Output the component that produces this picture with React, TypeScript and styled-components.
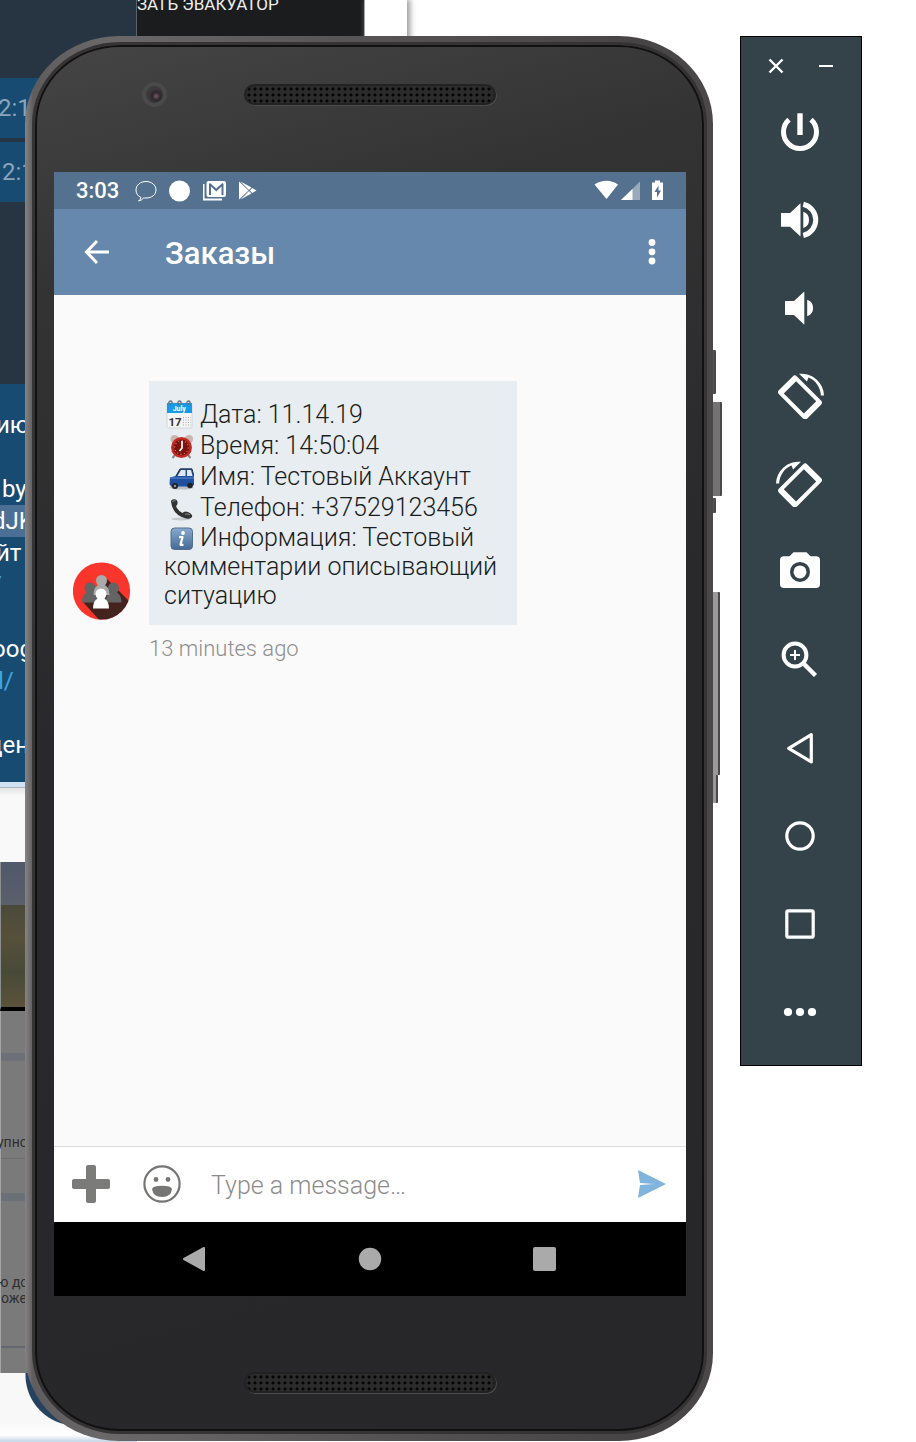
import React from "react";
import styled, { createGlobalStyle } from "styled-components";

const GlobalStyle = createGlobalStyle`
  * { box-sizing: border-box; }
  body { margin: 0; background: #fff; font-family: Roboto, "Noto Sans", sans-serif; }
  button { border: 0; padding: 0; background: none; color: inherit; font: inherit; cursor: pointer; }
  svg { display: block; flex: none; }
`;

const Desktop = styled.main`
  position: relative;
  display: flex;
  gap: 27px;
  min-height: 100vh;
  padding: 36px 54px 1px 25px;
  overflow: hidden;
`;

/* Windows left open behind the emulator */

const Backdrop = styled.div`
  position: absolute;
  inset: 0;
  display: flex;
  align-items: flex-start;
  overflow: hidden;
`;

const Stack = styled.div`
  width: 137px;
  flex: none;
  display: flex;
  flex-direction: column;
`;

const ChatWindow = styled.div`
  height: 782px;
  padding-top: 78px;
  background: #273442;
  border-right: 1px solid #59636d;
`;

const TimeBlock = styled.div<{ $shift: number }>`
  height: 60px;
  margin-bottom: 4px;
  text-indent: ${(p) => p.$shift}px;
  background: #184b72;
  color: #88a5bb;
  font-size: 24px;
  line-height: 60px;
`;

const LongMessage = styled.div`
  height: 398px;
  margin-top: 182px;
  padding-top: 25px;
  background: #184b72;
  color: #fff;
  font-size: 24px;
  line-height: 32px;
`;

const MessageLine = styled.div<{ $shift?: number; $link?: boolean; $selected?: boolean }>`
  height: 32px;
  text-indent: ${(p) => p.$shift ?? 0}px;
  white-space: nowrap;
  color: ${(p) => (p.$link ? "#3ea6e0" : "inherit")};
  background: ${(p) => (p.$selected ? "#4c6f96" : "transparent")};
`;

const PaleEdge = styled.div`
  height: 6px;
  background: #cfe2f3;
  border-bottom: 1px solid #a9b4bf;
`;

const BlankPage = styled.div`
  height: 74px;
  background: linear-gradient(#e4e4e4, #f9f9f9 8px);
`;

const MapPhoto = styled.div`
  height: 149px;
  border-left: 1px solid #8b8f90;
  border-bottom: 4px solid #000;
  background: linear-gradient(#50596a, #5a5f6b 43px, #4a4a3a 43px, #56503a 75px, #484a38 110px, #5b523a);
`;

const DimmedPage = styled.div`
  height: 362px;
  padding-top: 123px;
  border-left: 1px solid #a5a5a5;
  color: #303030;
  font-size: 14px;
  line-height: 16px;
  background:
    linear-gradient(#6d7077, #6d7077) 0 42px / 100% 8px no-repeat,
    linear-gradient(#6f6f6f, #6f6f6f) 0 147px / 100% 1px no-repeat,
    linear-gradient(#6a7076, #6a7076) 0 182px / 100% 8px no-repeat,
    linear-gradient(#62686d, #62686d) 0 335px / 100% 2px no-repeat,
    #7a7a7a;
`;

const DimmedText = styled.p`
  margin: 0 0 124px;
  text-indent: -4px;
  white-space: pre-line;
`;

const RoundedFooter = styled.div`
  height: 69px;
  background: radial-gradient(circle at 76px 2px, #27425f 50px, transparent 51px), linear-gradient(#f8f8f8 50px, #fff 62px, #c3d4e4);
`;

const AppWindow = styled.div`
  width: 228px;
  height: 60px;
  flex: none;
  background: #1a1c1e;
  border-right: 1px solid #aaa;
  color: #eee;
  font-size: 17px;
  line-height: 20px;
  white-space: nowrap;
  overflow: hidden;
`;

const AppWindowTitle = styled.div`
  margin-top: -6px;
`;

const PaperWindow = styled.div`
  width: 42px;
  height: 60px;
  flex: none;
  background: #fff;
  box-shadow: 2px 0 6px 1px #999;
`;

/* Phone */

const Phone = styled.section`
  position: relative;
  flex: 1;
  display: flex;
  padding: 6px 6px 7px 7px;
  border-radius: 94px / 88px;
  background: linear-gradient(90deg, #858383, #5e5c5c 8px, #6a6868 80px, #555353 50%, #464445 calc(100% - 80px), #4a4849);
`;

const SideKey = styled.i<{ $top: number; $length: number; $depth: number; $tone: string }>`
  position: absolute;
  left: 100%;
  top: ${(p) => p.$top}px;
  width: ${(p) => p.$depth}px;
  height: ${(p) => p.$length}px;
  border-right: 2px solid #4a4849;
  border-radius: 0 1px 1px 0;
  background: ${(p) => p.$tone};
`;

const Glass = styled.div`
  flex: 1;
  min-width: 0;
  display: flex;
  flex-direction: column;
  padding: 0 18px 0 19px;
  border: 3px solid #353334;
  border-radius: 88px / 82px;
  box-shadow: inset 0 0 0 2px #111;
  background: linear-gradient(165deg, #464545 0, #343334 16%, #29282a 45%, #272628 100%);
`;

const Bezel = styled.div<{ $bottom?: boolean }>`
  position: relative;
  height: ${(p) => (p.$bottom ? 135 : 127)}px;
  flex: none;
  display: flex;
  justify-content: center;
  padding-top: ${(p) => (p.$bottom ? 76 : 39)}px;
`;

const Speaker = styled.div`
  width: 252px;
  height: 21px;
  border: 2px solid #222223;
  border-radius: 11px;
  box-shadow: 1px 1px 0 #4c4c4c;
  background: radial-gradient(circle, #050505 1px, #2b2b2b 2px) 0 0 / 6px 6px;
`;

const Camera = styled.div`
  position: absolute;
  left: 88px;
  top: 37px;
  width: 25px;
  height: 25px;
  border: 4px solid #4b4a4a;
  border-radius: 50%;
  background: radial-gradient(circle at 60% 60%, #7a5a60 0, #2c272d 4px, #3d3a3c 8px);
`;

const Screen = styled.div`
  flex: 1;
  display: flex;
  flex-direction: column;
  background: #fafafa;
`;

const StatusBar = styled.div`
  height: 37px;
  display: flex;
  align-items: center;
  justify-content: space-between;
  padding: 0 22px;
  background: #54728f;
  color: #fff;
`;

const StatusGroup = styled.div<{ $gap: number }>`
  display: flex;
  align-items: center;
  gap: ${(p) => p.$gap}px;
`;

const Clock = styled.time`
  margin-right: 4px;
  font-size: 22px;
  font-weight: 500;
  line-height: 37px;
`;

const AppBar = styled.header`
  height: 86px;
  display: flex;
  align-items: center;
  padding: 0 20px 0 28px;
  background: #6588ac;
  color: #fff;
`;

const AppTitle = styled.h1`
  flex: 1;
  margin: 4px 0 0 53px;
  font-size: 31px;
  font-weight: 500;
  line-height: 40px;
`;

const Conversation = styled.div`
  flex: 1;
  padding: 86px 19px;
`;

const Message = styled.article`
  display: grid;
  grid-template-columns: 58px minmax(0, 368px);
  column-gap: 18px;
`;

const Avatar = styled.div`
  align-self: end;
  padding-bottom: 5px;
`;

const Bubble = styled.div`
  padding: 18px 15px 15px;
  background: #e8edf1;
  color: #1a1d20;
  font-size: 25px;
  font-weight: 300;
  line-height: 31px;
`;

const BubbleText = styled.p`
  margin: 0;
  &:last-child { line-height: 29px; }
  svg {
    display: inline-block;
    width: 30px;
    height: 30px;
    margin: -6px 6px -6px 0;
    vertical-align: baseline;
  }
`;

const Sent = styled.time`
  grid-column: 2;
  margin-top: 9px;
  color: #8f8f8f;
  font-size: 22px;
  font-weight: 300;
  line-height: 30px;
`;

const Composer = styled.form`
  height: 76px;
  display: flex;
  align-items: center;
  padding: 0 19px 0 18px;
  border-top: 1px solid #ddd;
  background: #fff;
`;

const MessageInput = styled.input`
  flex: 1;
  min-width: 0;
  margin: 2px 24px 0 29px;
  padding: 0;
  border: 0;
  outline: 0;
  background: none;
  font: 300 25px/32px Roboto, sans-serif;
  &::placeholder { color: #8c8c8c; opacity: 1; }
`;

const EmojiButton = styled.button`
  margin-left: 32px;
`;

const NavBar = styled.nav`
  height: 74px;
  display: flex;
  align-items: center;
  justify-content: center;
  gap: 151px;
  background: #000;
  color: #aaa;
`;

/* Emulator tool strip */

const Tools = styled.aside`
  position: relative;
  align-self: flex-start;
  width: 122px;
  flex: none;
  padding-bottom: 10px;
  border: 1px solid #000;
  background: #344249;
  color: #fff;
`;

const WindowButtons = styled.div`
  height: 50px;
  display: flex;
  justify-content: center;
  padding-top: 8px;
`;

const WindowButton = styled.button`
  width: 50px;
  height: 42px;
  display: grid;
  place-items: center;
`;

const ToolButton = styled.button`
  width: 118px;
  height: 88px;
  display: grid;
  place-items: center;
`;

const Glyph = ({ children, w = 48, h = w }: { children: React.ReactNode; w?: number; h?: number }) => (
  <svg width={w} height={h} viewBox={`0 0 ${w} ${h}`} fill="currentColor" aria-hidden="true">
    {children}
  </svg>
);

const RotateShape = () => (
  <>
    <path
      transform="translate(24 26.4) rotate(-45)"
      fillRule="evenodd"
      d="M-17 -12.7H17A3 3 0 0 1 20 -9.7V9.7A3 3 0 0 1 17 12.7H-17A3 3 0 0 1 -20 9.7V-9.7A3 3 0 0 1 -17 -12.7ZM-14.2 -8.7V8.7H14.2V-8.7Z"
    />
    <path d="M0 24.5A22.5 22.5 0 0 1 25 2.8L17 10.6L15.6 6.6A19.5 19.5 0 0 0 3.2 24.5Z" />
  </>
);

const tools: { label: string; shape: React.ReactNode }[] = [
  {
    label: "Power",
    shape: (
      <>
        <path d="M13 12.7A16.5 16.5 0 1 0 35 12.7" fill="none" stroke="currentColor" strokeWidth="5" />
        <path d="M21.3 6.3h5.4v21.7h-5.4z" />
      </>
    ),
  },
  {
    label: "Volume up",
    shape: (
      <>
        <path d="M5 18H14L24.5 8.3V41.5L14 31.8H5ZM27.3 16.8A8.6 8.6 0 0 1 27.3 33Z" />
        <path d="M27.3 9.3A16 16 0 0 1 27.3 40.5" fill="none" stroke="currentColor" strokeWidth="5" />
      </>
    ),
  },
  { label: "Volume down", shape: <path d="M9 18H18L28.3 8.6V41.7L18 32H9ZM31.2 16.7A8.8 8.8 0 0 1 31.2 33.3Z" /> },
  { label: "Rotate left", shape: <g transform="translate(48 0) scale(-1 1)"><RotateShape /></g> },
  { label: "Rotate right", shape: <RotateShape /> },
  {
    label: "Take screenshot",
    shape: (
      <>
        <path
          fillRule="evenodd"
          d="M17.5 5.2H30.5L34.5 9.2H40A4 4 0 0 1 44 13.2V37A4 4 0 0 1 40 41H8A4 4 0 0 1 4 37V13.2A4 4 0 0 1 8 9.2H13.5ZM24 14.9A10 10 0 1 0 24 34.9A10 10 0 1 0 24 14.9Z"
        />
        <circle cx="24" cy="24.9" r="6.5" />
      </>
    ),
  },
  {
    label: "Zoom",
    shape: (
      <g fill="none" stroke="currentColor">
        <circle cx="19" cy="20" r="11.4" strokeWidth="4" />
        <path d="M27.5 28.5L39.5 40.5" strokeWidth="4.4" />
        <path d="M14 20H24M19 15V25" strokeWidth="2" />
      </g>
    ),
  },
  { label: "Back", shape: <path d="M35.3 11.7V38.9L12.7 25.3Z" fill="none" stroke="currentColor" strokeWidth="3.2" strokeLinejoin="round" /> },
  { label: "Home", shape: <circle cx="24" cy="25" r="13.2" fill="none" stroke="currentColor" strokeWidth="3.2" /> },
  { label: "Overview", shape: <rect x="10.8" y="11.8" width="26.4" height="26.4" rx="1.5" fill="none" stroke="currentColor" strokeWidth="3.2" /> },
  {
    label: "More",
    shape: (
      <>
        <circle cx="12" cy="25" r="4.1" />
        <circle cx="24" cy="25" r="4.1" />
        <circle cx="36" cy="25" r="4.1" />
      </>
    ),
  },
];

const CalendarIcon = () => (
  <svg viewBox="0 0 30 30" aria-hidden="true">
    <rect x="3" y="4" width="25" height="25" rx="1.5" fill="#f4f4f4" stroke="#c3c7ca" strokeWidth="0.6" />
    <path d="M3 4H28V14H3Z" fill="#159be8" />
    <g fill="none" stroke="#69727a" strokeWidth="1.3"><circle cx="6.5" cy="3.6" r="1.6" /><circle cx="15.5" cy="3.6" r="1.6" /><circle cx="24.5" cy="3.6" r="1.6" /></g>
    <text x="15.3" y="12" fontSize="7" fontWeight="700" textAnchor="middle" fill="#fff" fontFamily="Roboto, sans-serif">July</text>
    <text x="4.5" y="26.5" fontSize="11.5" fontWeight="700" fill="#333" fontFamily="Roboto, sans-serif">17</text>
    <path d="M19 18.5H27M19 21H27M19 23.5H27M19 26H27" stroke="#aaa" strokeWidth="1" strokeDasharray="1 1.5" />
  </svg>
);

const AlarmIcon = () => (
  <svg viewBox="0 0 30 30" aria-hidden="true">
    <path d="M11 25L8.5 28M24 25L26.5 28" stroke="#888" strokeWidth="2" />
    <circle cx="10.5" cy="9" r="4" fill="#c9b5b2" />
    <circle cx="25" cy="9" r="4" fill="#c9b5b2" />
    <circle cx="17.5" cy="17.5" r="10.5" fill="#c42c22" />
    <circle cx="17.5" cy="17.5" r="8" fill="#7c130e" />
    <circle cx="17.5" cy="17.5" r="6.8" fill="none" stroke="#f0b3a8" strokeWidth="1" strokeDasharray="1 2.56" />
    <path d="M18 11V18L15.5 21" fill="none" stroke="#fff" strokeWidth="1.7" />
  </svg>
);

const CarIcon = () => (
  <svg viewBox="0 0 30 30" aria-hidden="true">
    <ellipse cx="17.5" cy="26.5" rx="12" ry="2" fill="#b9bec2" />
    <path d="M6 16.5L11.5 15L15.5 8.5Q16 7.5 17.5 7.5H28L30 16V24L27 25.5H7L5.5 23Z" fill="#1f4f9f" />
    <path d="M13.5 15L17 9H21.5V15ZM23 9H27L28.5 15H23Z" fill="#dfe8ee" />
    <path d="M12 15L16 8H28L30 15" fill="none" stroke="#26313f" strokeWidth="1" />
    <path d="M6 17H30" stroke="#4878c6" strokeWidth="1.5" />
    <circle cx="11" cy="25" r="3" fill="#222" />
    <circle cx="26" cy="24.5" r="2.8" fill="#222" />
    <circle cx="11" cy="25" r="1.2" fill="#999" />
  </svg>
);

const HandsetIcon = () => (
  <svg viewBox="0 0 30 30" aria-hidden="true">
    <ellipse cx="17" cy="27" rx="10" ry="1.4" fill="#c5cacd" />
    <path d="M7 9.5Q7 7.5 10 7.2Q13 7 13.5 10Q14 12.5 12 14Q13.5 18.5 18.5 21Q20.5 18.5 24 20Q29 22.5 28 25Q26.5 27.5 22 26.5Q8.5 23 7 9.5Z" fill="#333" />
    <path d="M8.5 10Q9.5 8 11.5 9M21 22.5Q23 21 26 23" fill="none" stroke="#777" strokeWidth="1.2" />
  </svg>
);

const InfoIcon = () => (
  <svg viewBox="0 0 30 30" aria-hidden="true">
    <defs>
      <linearGradient id="info" x2="0" y2="1"><stop stopColor="#88aacd" /><stop offset="1" stopColor="#466a95" /></linearGradient>
    </defs>
    <rect x="7" y="6" width="21.5" height="21.5" rx="3.5" fill="url(#info)" stroke="#526f91" />
    <circle cx="19" cy="11" r="1.9" fill="#fff" />
    <path d="M15 15.2H18.5L16.5 22.8H19.5" fill="none" stroke="#fff" strokeWidth="2.2" strokeLinejoin="round" />
  </svg>
);

const Pawn = ({ x, y, fill }: { x: number; y: number; fill: string }) => (
  <path
    transform={`translate(${x} ${y})`}
    fill={fill}
    d="M0 0A5.5 5.5 0 0 1 5.5 5.5Q5.5 8 3.6 10.2Q8 12.5 8 20H-8Q-8 12.5 -3.6 10.2Q-5.5 8 -5.5 5.5A5.5 5.5 0 0 1 0 0Z"
  />
);

const AvatarPicture = () => (
  <svg width="58" height="58" viewBox="0 0 58 58" role="img" aria-label="Group">
    <defs><clipPath id="round"><circle cx="28.5" cy="29" r="28.6" /></clipPath></defs>
    <g clipPath="url(#round)">
      <path d="M0 0H58V58H0Z" fill="#fa352c" />
      <path d="M34 17L60 43V60H28L10 40Z" fill="#44231f" />
      <Pawn x={17} y={20.5} fill="#656465" />
      <Pawn x={40.5} y={20.5} fill="#656465" />
      <Pawn x={28.5} y={13} fill="#aaa" />
      <Pawn x={28} y={26.5} fill="#fff" />
    </g>
  </svg>
);

export default function App() {
  return (
    <>
      <GlobalStyle />
      <Desktop>
        <Backdrop>
          <Stack>
            <ChatWindow>
              <TimeBlock $shift={-2}>2:1</TimeBlock>
              <TimeBlock $shift={2}>2:1</TimeBlock>
              <LongMessage>
                <MessageLine $shift={-4}>ию</MessageLine>
                <MessageLine />
                <MessageLine $shift={2}>by</MessageLine>
                <MessageLine $shift={-8} $selected>dJK</MessageLine>
                <MessageLine $shift={-4}>йт</MessageLine>
                <MessageLine $shift={-8} $link>/</MessageLine>
                <MessageLine />
                <MessageLine $shift={-8}>oog</MessageLine>
                <MessageLine $shift={-2} $link>l/</MessageLine>
                <MessageLine />
                <MessageLine $shift={-12}>ден</MessageLine>
              </LongMessage>
            </ChatWindow>
            <PaleEdge />
            <BlankPage />
            <MapPhoto />
            <DimmedPage>
              <DimmedText>упно</DimmedText>
              <DimmedText>{"ю до\nоже"}</DimmedText>
            </DimmedPage>
            <RoundedFooter />
          </Stack>
          <AppWindow>
            <AppWindowTitle>ЗАТЬ ЭВАКУАТОР</AppWindowTitle>
          </AppWindow>
          <PaperWindow />
        </Backdrop>

        <Phone>
          <SideKey $top={314} $length={44} $depth={3} $tone="#555354" />
          <SideKey $top={366} $length={94} $depth={9} $tone="#747273" />
          <SideKey $top={462} $length={15} $depth={3} $tone="#555354" />
          <SideKey $top={556} $length={183} $depth={7} $tone="#9b9999" />
          <SideKey $top={739} $length={28} $depth={5} $tone="#9b9999" />
          <Glass>
            <Bezel>
              <Camera />
              <Speaker />
            </Bezel>
            <Screen>
              <StatusBar>
                <StatusGroup $gap={12}>
                  <Clock>3:03</Clock>
                  <Glyph w={22} h={22}>
                    <path d="M6 17.5C2.5 16 1 13 1 10C1 5 5.5 1.5 11 1.5S21 5 21 10S16.5 18 11 18Q9.5 18 8.5 18Q6.5 20.5 3.5 21Q6 19 6 17.5Z" fill="none" stroke="currentColor" />
                  </Glyph>
                  <Glyph w={22} h={22}><circle cx="10.5" cy="11" r="10.5" /></Glyph>
                  <Glyph w={24} h={22}>
                    <path d="M0.5 4V19.5H19" fill="none" stroke="currentColor" strokeWidth="2" />
                    <path fillRule="evenodd" d="M5.5 1H21Q23 1 23 3V15Q23 17 21 17H5.5Q3.5 17 3.5 15V3Q3.5 1 5.5 1ZM6 4V15H8V6.5L13.25 11.5L18.5 6.5V15H20.5V4L19.5 3L13.25 8.5L7 3Z" />
                  </Glyph>
                  <Glyph w={20} h={22}>
                    <path d="M0 1.5L9.5 10.5L0 19.5ZM1.5 1.5L12.5 7.5L10 10ZM1.5 19.5L12.5 13.5L10 11ZM13.3 8L17.5 10.5L13.3 13L10.8 10.5Z" />
                  </Glyph>
                </StatusGroup>
                <StatusGroup $gap={3}>
                  <Glyph w={24} h={22}><path d="M12.5 19L0.5 4.5Q12.5 -3 24 4.5Z" /></Glyph>
                  <Glyph w={19} h={22}><path d="M0 20L19 1.5V20Z" opacity=".4" /><path d="M0 20L11.5 9V20Z" /></Glyph>
                  <Glyph w={21} h={22}>
                    <path fillRule="evenodd" d="M12 0.5H17V2.5H20V20H9V2.5H12ZM15.5 5.5L11.5 12H14V17.5L18 10.5H15.5Z" />
                  </Glyph>
                </StatusGroup>
              </StatusBar>

              <AppBar>
                <button type="button" aria-label="Back">
                  <Glyph w={30} h={30}><path d="M27 15H5M15 4L4.5 15L15 26" fill="none" stroke="currentColor" strokeWidth="3" /></Glyph>
                </button>
                <AppTitle>Заказы</AppTitle>
                <button type="button" aria-label="More options">
                  <Glyph w={28} h={30}><circle cx="14" cy="5.5" r="3.4" /><circle cx="14" cy="14.8" r="3.4" /><circle cx="14" cy="24" r="3.4" /></Glyph>
                </button>
              </AppBar>

              <Conversation>
                <Message>
                  <Avatar><AvatarPicture /></Avatar>
                  <Bubble>
                    <BubbleText><CalendarIcon />Дата: 11.14.19</BubbleText>
                    <BubbleText><AlarmIcon />Время: 14:50:04</BubbleText>
                    <BubbleText><CarIcon />Имя: Тестовый Аккаунт</BubbleText>
                    <BubbleText><HandsetIcon />Телефон: +37529123456</BubbleText>
                    <BubbleText><InfoIcon />Информация: Тестовый комментарии описывающий ситуацию</BubbleText>
                  </Bubble>
                  <Sent>13 minutes ago</Sent>
                </Message>
              </Conversation>

              <Composer onSubmit={(e) => e.preventDefault()}>
                <button type="button" aria-label="Attach">
                  <Glyph w={38} h={40}><rect x="14" width="10" height="38" rx="2" fill="#7b7b79" /><rect y="14" width="38" height="10" rx="2" fill="#7b7b79" /></Glyph>
                </button>
                <EmojiButton type="button" aria-label="Emoji">
                  <Glyph w={40} h={40}>
                    <g fill="#757573">
                      <circle cx="20" cy="19" r="17.6" fill="none" stroke="#757573" strokeWidth="2.2" />
                      <circle cx="14" cy="14.5" r="2.4" /><circle cx="26" cy="14.5" r="2.4" />
                      <path d="M10 24Q11 20.8 20 20.8T30 24Q29 32 20 32T10 24Z" />
                    </g>
                  </Glyph>
                </EmojiButton>
                <MessageInput aria-label="Message" placeholder="Type a message…" />
                <button type="submit" aria-label="Send">
                  <Glyph w={30} h={30}><path d="M1 0L29 14L1 28L3 15L17 14L3 13Z" fill="#7fb5dd" /></Glyph>
                </button>
              </Composer>

              <NavBar>
                <button type="button" aria-label="Back"><Glyph w={24} h={24}><path d="M21 1V23L1 12Z" stroke="currentColor" strokeWidth="2" strokeLinejoin="round" /></Glyph></button>
                <button type="button" aria-label="Home"><Glyph w={24} h={24}><circle cx="12" cy="12" r="11.2" /></Glyph></button>
                <button type="button" aria-label="Recent apps"><Glyph w={24} h={24}><rect width="23" height="24" rx="2" /></Glyph></button>
              </NavBar>
            </Screen>
            <Bezel $bottom>
              <Speaker />
            </Bezel>
          </Glass>
        </Phone>

        <Tools aria-label="Emulator controls">
          <WindowButtons>
            <WindowButton type="button" aria-label="Close">
              <Glyph w={16} h={16}><path d="M1.5 1.5L14.5 14.5M14.5 1.5L1.5 14.5" stroke="currentColor" strokeWidth="2.4" /></Glyph>
            </WindowButton>
            <WindowButton type="button" aria-label="Minimize">
              <Glyph w={16} h={16}><path d="M1 8H15" stroke="currentColor" strokeWidth="2" /></Glyph>
            </WindowButton>
          </WindowButtons>
          {tools.map((tool) => (
            <ToolButton key={tool.label} type="button" aria-label={tool.label}>
              <Glyph>{tool.shape}</Glyph>
            </ToolButton>
          ))}
        </Tools>
      </Desktop>
    </>
  );
}
